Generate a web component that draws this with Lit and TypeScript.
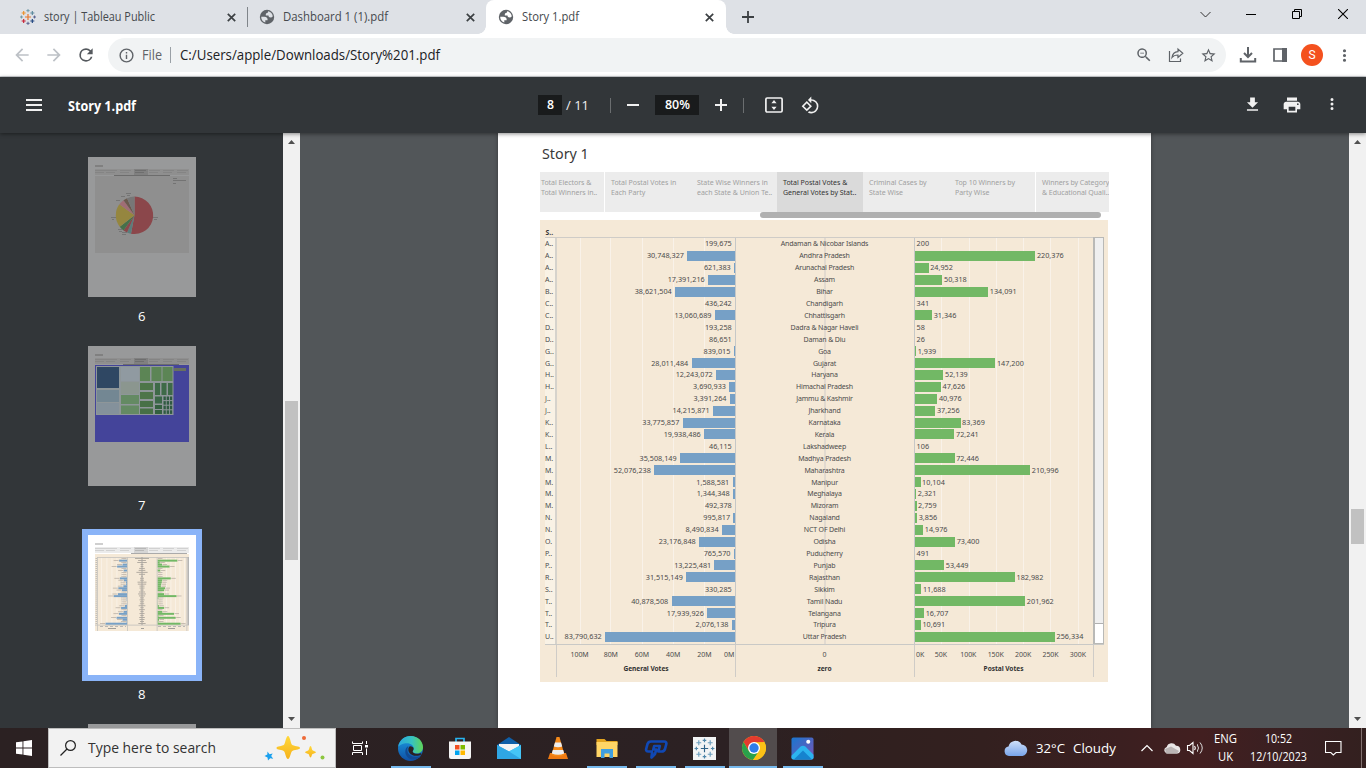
import { LitElement, html, svg, css } from 'lit';
import { customElement } from 'lit/decorators.js';

type State = [string, string, number, number];

const STATES: State[] = [
  ['A..', 'Andaman & Nicobar Islands', 199675, 200],
  ['A..', 'Andhra Pradesh', 30748327, 220376],
  ['A..', 'Arunachal Pradesh', 621383, 24952],
  ['A..', 'Assam', 17391216, 50318],
  ['B..', 'Bihar', 38621504, 134091],
  ['C..', 'Chandigarh', 436242, 341],
  ['C..', 'Chhattisgarh', 13060689, 31346],
  ['D..', 'Dadra & Nagar Haveli', 193258, 58],
  ['D..', 'Daman & Diu', 86651, 26],
  ['G..', 'Goa', 839015, 1939],
  ['G..', 'Gujarat', 28011484, 147200],
  ['H..', 'Haryana', 12243072, 52139],
  ['H..', 'Himachal Pradesh', 3690933, 47626],
  ['J..', 'Jammu & Kashmir', 3391264, 40976],
  ['J..', 'Jharkhand', 14215871, 37256],
  ['K..', 'Karnataka', 33775857, 83369],
  ['K..', 'Kerala', 19938486, 72241],
  ['L..', 'Lakshadweep', 46115, 106],
  ['M.', 'Madhya Pradesh', 35508149, 72446],
  ['M.', 'Maharashtra', 52076238, 210996],
  ['M.', 'Manipur', 1588581, 10104],
  ['M.', 'Meghalaya', 1344348, 2321],
  ['M.', 'Mizoram', 492378, 2759],
  ['N.', 'Nagaland', 995817, 3856],
  ['N.', 'NCT OF Delhi', 8490834, 14976],
  ['O.', 'Odisha', 23176848, 73400],
  ['P..', 'Puducherry', 765570, 491],
  ['P..', 'Punjab', 13225481, 53449],
  ['R..', 'Rajasthan', 31515149, 182982],
  ['S..', 'Sikkim', 330285, 11688],
  ['T..', 'Tamil Nadu', 40878508, 201962],
  ['T..', 'Telangana', 17939926, 16707],
  ['T..', 'Tripura', 2076138, 10691],
  ['U..', 'Uttar Pradesh', 83790632, 256334],
];

const num = (n: number) => n.toLocaleString('en-US');
const general = (n: number) => (n / 1e6) * 1.552;
const postal = (n: number) => (n / 1e3) * 0.546;

/** Values too small to show get no bar, only the label. */
const visible = (w: number) => (w < 0.8 ? 0 : w);

/** Single-line label of a fixed advance width. */
const label = (text: string, width: number, size: number, color: string, weight = 400) => {
  const h = Math.ceil(size / 2) * 2 + 6;
  return html`<svg class="label" width=${width} height=${h}>
    <text x="0" y=${Math.round(h / 2 + size * 0.357)} textLength=${width} lengthAdjust="spacingAndGlyphs"
      font-size=${size} font-weight=${weight} fill=${color}>${text}</text></svg>`;
};

const icon = (size: number, box: string, body: unknown) =>
  html`<svg width=${size} height=${size} viewBox=${box}>${body}</svg>`;

const material = (size: number, d: string, fill: string) =>
  icon(size, '0 0 24 24', svg`<path d=${d} fill=${fill}/>`);

const P = {
  back: 'M20 11H7.83l5.59-5.59L12 4l-8 8 8 8 1.41-1.41L7.83 13H20v-2z',
  fwd: 'M12 4l-1.41 1.41L16.17 11H4v2h12.17l-5.58 5.59L12 20l8-8z',
  reload: 'M17.65 6.35A7.96 7.96 0 0 0 12 4a8 8 0 1 0 7.73 10h-2.08A6 6 0 1 1 12 6c1.66 0 3.14.69 4.22 1.78L13 11h7V4l-2.35 2.35z',
  info: 'M11 7h2v2h-2zm0 4h2v6h-2zm1-9a10 10 0 1 0 0 20 10 10 0 0 0 0-20zm0 18a8 8 0 1 1 0-16 8 8 0 0 1 0 16z',
  zoomOut: 'M15.5 14h-.79l-.28-.27A6.5 6.5 0 1 0 13.73 14.43l.27.28v.79l5 4.99L20.49 19l-4.99-5zm-6 0a4.5 4.5 0 1 1 0-9 4.5 4.5 0 0 1 0 9zM7 9h5v1H7z',
  star: 'M22 9.24l-7.19-.62L12 2 9.19 8.63 2 9.24l5.46 4.73L5.82 21 12 17.27 18.18 21l-1.63-7.03L22 9.24zM12 15.4l-3.76 2.27 1-4.28-3.32-2.88 4.38-.38L12 6.1l1.71 4.04 4.38.38-3.32 2.88 1 4.28L12 15.4z',
  dots: 'M12 8a2 2 0 1 0 0-4 2 2 0 0 0 0 4zm0 2a2 2 0 1 0 0 4 2 2 0 0 0 0-4zm0 6a2 2 0 1 0 0 4 2 2 0 0 0 0-4z',
  download: 'M19 9h-4V3H9v6H5l7 7 7-7zM5 18v2h14v-2H5z',
  print: 'M19 8H5c-1.66 0-3 1.34-3 3v6h4v4h12v-4h4v-6c0-1.66-1.34-3-3-3zm-3 11H8v-5h8v5zm3-7a1 1 0 1 1 0-2 1 1 0 0 1 0 2zm-1-9H6v4h12V3z',
  rotate: 'M7.340 6.410L.860 12.900l6.490 6.480 6.490-6.480-6.500-6.490zM3.690 12.900l3.660-3.660L11 12.900l-3.660 3.660-3.650-3.660zm15.670-6.260A8.950 8.950 0 0 0 13 4V.760L8.760 5 13 9.240V6c1.790 0 3.580.680 4.950 2.050a7.007 7.007 0 0 1 0 9.900A6.973 6.973 0 0 1 13 20c-.970 0-1.940-.210-2.840-.610l-1.490 1.490A8.980 8.980 0 0 0 13 22c2.300 0 4.610-.880 6.360-2.640a8.980 8.980 0 0 0 0-12.720z',
};

const globe = (bg: string) => icon(16, '0 0 16 16', svg`
  <circle cx="8" cy="8" r="7.200" fill="#5f6368"/>
  <path d="M2.200 7.700h3.200c2.300 0 3.500 1.200 3.200 3.500H6.300v2.300C3.800 12.800 2.100 10.500 2.200 7.700zM13.800 7.200c-.5.800-1.200 1.200-2.100 1.200-1.500 0-2.200-.6-2.200-1.900H6.800c-.2-1.900.5-2.800 2-2.800 0-.7.2-1.100.6-1.400 2.300.5 4.100 2.500 4.400 4.900z" fill=${bg}/>`);

const plusMark = (x: number, y: number, r: number, c: string, w: number) =>
  svg`<path d=${`M${x - r} ${y}H${x + r}M${x} ${y - r}V${y + r}`} stroke=${c} stroke-width=${w}/>`;

const tableau = (size: number) => icon(size, '0 0 24 24', svg`
    ${plusMark(12, 12, 4.500, '#e8762c', 1.8)}
    ${plusMark(5.500, 6, 3, '#eb912b', 1.7)}${plusMark(18.500, 6, 3, '#59879b', 1.7)}
    ${plusMark(5.500, 18, 3, '#c72035', 1.7)}${plusMark(18.500, 18, 3, '#1f447e', 1.7)}
    ${plusMark(12, 2.500, 2.400, '#7099a6', 1.5)}${plusMark(12, 21.500, 2.400, '#5b6591', 1.5)}
    ${plusMark(2.200, 12, 2.200, '#7099a6', 1.5)}${plusMark(21.800, 12, 2.200, '#5b6591', 1.5)}`);

const closeX = icon(9, '0 0 9 9', svg`<path d="M.8.8l7.400 7.400M8.200.8L.8 8.200" stroke="#3c4043" stroke-width="1.700"/>`);

const arrowUp = html`<svg width="17" height="17" viewBox="0 0 17 17"><path d="M5 11l3.500-4 3.500 4z" fill="#505050"/></svg>`;
const arrowDown = html`<svg width="17" height="17" viewBox="0 0 17 17"><path d="M5 6l3.500 4L12 6z" fill="#505050"/></svg>`;

const base = css`
  :host { font-family: 'Open Sans', 'Noto Sans', sans-serif; box-sizing: border-box; }
  *, *::before, *::after { box-sizing: border-box; }
  svg { display: block; flex: none; }
  .label { overflow: visible; }
`;

@customElement('browser-chrome')
export class BrowserChrome extends LitElement {
  static styles = [base, css`
    :host { display: block; height: 77px; background: #fff; border-bottom: 1px solid #d0d3d6; }
    .strip { height: 34px; display: flex; background: #dee1e6; }
    .tab { display: flex; align-items: center; height: 34px; gap: 8px; }
    .tab .label { margin-right: auto; }
    .first { width: 248px; padding: 0 12px 0 20px; }
    .rule { width: 1px; height: 20px; margin: 7px 0 0 -1px; background: #80858a; }
    .second { width: 238px; padding: 0 11px; }
    .active { width: 240px; padding: 0 12px; background: #fff; border-radius: 8px 8px 0 0; }
    .foot { align-self: flex-end; width: 8px; height: 8px; }
    .l { margin-left: -8px; background: radial-gradient(circle at 0 0, #dee1e6 7.500px, #fff 8px); }
    .r { background: radial-gradient(circle at 100% 0, #dee1e6 7.500px, #fff 8px); }
    .new { width: 28px; display: flex; align-items: center; justify-content: center; }
    .win { margin-left: auto; display: flex; height: 28px; }
    .win span { width: 46px; display: flex; align-items: center; justify-content: center; }
    .bar { display: flex; align-items: center; height: 42px; padding-left: 6px; }
    .btn { width: 32px; display: flex; justify-content: center; flex: none; }
    .omni { width: 1118px; height: 34px; margin-left: 6px; border-radius: 17px; background: #f1f3f4; display: flex; align-items: center; padding: 0 2px; }
    .sep { width: 1px; height: 16px; margin: 0 9px 0 8px; background: #9aa0a6; }
    .url { margin-right: auto; }
    .avatar { width: 22px; height: 22px; border-radius: 50%; background: #f4511e; color: #fff; font: 12px/22px Roboto, sans-serif; text-align: center; }
    .right { display: flex; align-items: center; padding-left: 6px; }
  `];
  render() {
    return html`
      <div class="strip">
        <div class="tab first">${tableau(16)}${label('story | Tableau Public', 111, 12.5, '#45494d')}${closeX}</div>
        <i class="rule"></i>
        <div class="tab second">${globe('#dee1e6')}${label('Dashboard 1 (1).pdf', 105, 12.5, '#45494d')}${closeX}</div>
        <i class="foot l"></i>
        <div class="tab active">${globe('#fff')}${label('Story 1.pdf', 57, 12.5, '#45494d')}${closeX}</div>
        <i class="foot r"></i>
        <div class="new">${icon(12, '0 0 12 12', svg`<path d="M0 6h12M6 0v12" stroke="#3c4043" stroke-width="1.800"/>`)}</div>
        <div class="win">
          <span>${icon(11, '0 0 11 11', svg`<path d="M.5 3l5 5 5-5" fill="none" stroke="#333"/>`)}</span>
          <span>${icon(10, '0 0 10 10', svg`<path d="M0 5.500h10" stroke="#000"/>`)}</span>
          <span>${icon(10, '0 0 10 10', svg`<path d="M.5 2.500h7v7h-7zM2.500 2.500v-2h7v7h-2" fill="none" stroke="#000"/>`)}</span>
          <span>${icon(10, '0 0 10 10', svg`<path d="M0 0l10 10M10 0L0 10" stroke="#000" stroke-width="1.100"/>`)}</span>
        </div>
      </div>
      <div class="bar">
        <span class="btn">${material(20, P.back, '#bdc1c6')}</span>
        <span class="btn">${material(20, P.fwd, '#bdc1c6')}</span>
        <span class="btn">${material(20, P.reload, '#55595e')}</span>
        <div class="omni">
          <span class="btn">${material(17, P.info, '#5f6368')}</span>
          ${label('File', 20, 14, '#5f6368')}<i class="sep"></i>
          <span class="url">${label('C:/Users/apple/Downloads/Story%201.pdf', 260, 14, '#202124')}</span>
          <span class="btn">${material(18, P.zoomOut, '#5f6368')}</span>
          <span class="btn">${icon(16, '0 0 16 16', svg`<path d="M1.500 4v10.500h11v-3M4 10.500c.5-4 2.500-5.700 6-5.900V2l4.800 4.300L10 10.500V8c-2.800 0-4.500.6-6 2.500z" fill="none" stroke="#5f6368" stroke-width="1.200"/>`)}</span>
          <span class="btn">${material(17, P.star, '#5f6368')}</span>
        </div>
        <div class="right">
          <span class="btn">${icon(18, '0 0 18 18', svg`<path d="M9 1v9M5 7l4 4 4-4M1.800 12v3.500h14.400V12" fill="none" stroke="#5f6368" stroke-width="2"/>`)}</span>
          <span class="btn">${icon(14, '0 0 14 14', svg`<path d="M1 1h12v12H1z" fill="none" stroke="#5f6368" stroke-width="1.700"/><path d="M9 0h5v14H9z" fill="#5f6368"/>`)}</span>
          <span class="btn"><span class="avatar">S</span></span>
          <span class="btn">${material(19, P.dots, '#5f6368')}</span>
        </div>
      </div>`;
  }
}

@customElement('pdf-toolbar')
export class PdfToolbar extends LitElement {
  static styles = [base, css`
    :host { display: flex; align-items: center; height: 56px; background: #323639; box-shadow: 0 1px 4px rgba(0,0,0,.45); position: relative; z-index: 1; }
    .menu { margin: 0 25px 0 25px; width: 18px; display: flex; justify-content: center; }
    .name { margin-right: 402px; padding-top: 2px; }
    .box { height: 20px; background: #191b1c; display: flex; align-items: center; justify-content: center; }
    .page { width: 24px; margin-right: 4px; }
    .pct { width: 44px; margin: 0 16px; }
    .sep { width: 1px; height: 15px; background: #6b6e70; }
    .s1 { margin: 0 16px 0 21px; }
    .s2 { margin: 0 20px 0 16px; }
    .rot { margin-left: 17px; }
    .end { margin: 0 14px 0 auto; display: flex; }
    .end span { width: 40px; display: flex; justify-content: center; }
  `];
  render() {
    const w = '#f1f1f1';
    return html`
      <span class="menu">${icon(16, '0 0 16 16', svg`<path d="M0 3h16M0 8h16M0 13h16" stroke=${w} stroke-width="2"/>`)}</span>
      <span class="name">${label('Story 1.pdf', 68, 13.5, '#fff', 700)}</span>
      <span class="box page">${label('8', 7, 12.5, '#fff', 600)}</span>
      ${label('/ 11', 23, 13, w)}
      <i class="sep s1"></i>
      ${icon(12, '0 0 12 12', svg`<path d="M0 6h12" stroke=${w} stroke-width="2"/>`)}
      <span class="box pct">${label('80%', 25, 12.5, '#fff', 600)}</span>
      ${icon(12, '0 0 12 12', svg`<path d="M0 6h12M6 0v12" stroke=${w} stroke-width="2"/>`)}
      <i class="sep s2"></i>
      ${icon(20, '0 0 20 20', svg`<rect x="1.900" y="3" width="16.200" height="14" rx="1.200" fill="none" stroke=${w} stroke-width="1.700"/><path d="M10 5l2.600 3.200H7.400zM10 15l2.600-3.200H7.400z" fill=${w}/>`)}
      <span class="rot">${material(19, P.rotate, w)}</span>
      <span class="end">
        <span>${material(19, P.download, w)}</span><span>${material(20, P.print, w)}</span><span>${material(18, P.dots, w)}</span>
      </span>`;
  }
}

const slice = (a0: number, a1: number, c: string) => {
  const p = (a: number) => `${46.500 + 18.700 * Math.sin(a * 6.2832)} ${58.300 - 18.700 * Math.cos(a * 6.2832)}`;
  return svg`<path d=${`M46.500 58.300L${p(a0)}A18.700 18.700 0 ${a1 - a0 > 0.5 ? 1 : 0} 1 ${p(a1)}z`} fill=${c}/>`;
};

const miniTabs = (active: number, s0: number, s1: number, dim: boolean) => {
  const t = dim ? '#808080' : '#c6c6c6';
  return svg`
    <rect x="7" y="8.200" width="8" height="1.600" fill=${dim ? '#7b7b7b' : '#c4c4c4'}/>
    <rect x="7" y="12" width="94" height="6" fill=${dim ? '#8f8f8f' : '#ebebeb'}/>
    <rect x=${active} y="12" width="14" height="6" fill=${dim ? '#808080' : '#d5d5d5'}/>
    ${[7, 18, 32, 47, 61, 75, 89].map((x) => svg`<path d=${`M${x} 13.500h11M${x} 15.500h9`} stroke=${x === 47 ? (dim ? '#666' : '#aaa') : t} stroke-width=".7"/>`)}
    <rect x=${s0} y="18" width=${s1 - s0} height="1" fill=${dim ? '#6c6c6c' : '#aaa'}/>`;
};

const thumbPie = svg`
  <rect width="108" height="140" fill="#98999a"/>${miniTabs(46, 26, 82, true)}
  <rect x="7" y="19" width="94" height="77" fill="#8f8f8f"/>
  ${slice(0, 0.53, '#8b474b')}${slice(0.53, 0.565, '#5b7d7c')}${slice(0.565, 0.6, '#8b474b')}
  ${slice(0.6, 0.645, '#46704a')}${slice(0.645, 0.85, '#95863f')}${slice(0.85, 0.9, '#a06d75')}
  ${slice(0.9, 0.935, '#6b594e')}${slice(0.935, 1, '#777')}
  <path d="M38 36.500h5M39 38.500h3M33 39.500h4M28 43.500h4M23 60.500h5M24 62.500h2M65 60.500h5M66 62.500h3M30 72.500h4M31 74.500h3M34 75.500h5M34 77.500h4" stroke="#6f6f6f" stroke-width=".8"/>
  <path d="M85 21.500h4M85 23.500h9M94 23.500h4M85 26.500h3" stroke="#737373"/>`;

const R = (x: number, y: number, w: number, h: number, f: string) =>
  svg`<rect x=${x} y=${y} width=${w} height=${h} fill=${f}/>`;

const thumbTree = svg`
  ${R(0, 0, 108, 140, '#98999a')}${miniTabs(46, 35, 91, true)}
  ${R(7, 19, 94, 77, '#44449a')}${R(8, 20, 77.500, 49, '#8e9699')}
  ${R(9, 21, 22, 21, '#2f4763')}${R(9, 44, 22, 12, '#738793')}${R(9, 57, 22, 11, '#84919b')}
  ${R(33, 21, 18, 14, '#909aa1')}${R(33, 36, 18, 12, '#8b968f')}${R(33, 49, 18, 9, '#648a63')}${R(33, 59.500, 18, 8.500, '#648a63')}
  ${R(52, 21, 10, 14, '#5c8555')}${R(63.500, 21, 10, 14, '#5c8555')}${R(74.500, 21, 10, 14, '#5c8555')}
  ${R(52, 37, 13, 7, '#4d7549')}${R(52, 46, 13, 7, '#4d7549')}${R(52, 55, 13, 6, '#477046')}${R(52, 62.500, 13, 5.500, '#477046')}
  ${R(67, 37, 5, 12, '#3e6a48')}${R(73.500, 37, 5, 12, '#3e6a48')}${R(80, 37, 4.500, 12, '#3e6a48')}
  ${R(67, 50.500, 7, 7, '#3b6848')}${R(67, 59, 7, 4, '#33603f')}${R(67, 64, 7, 4, '#33603f')}
  ${[0, 1, 2, 3].map((r) => [0, 1, 2].map((c) => R(75.500 + c * 3.200, 50.500 + r * 4.600, 2.300, 3.600, '#2f5a41')))}
  ${R(86, 22, 12, 3, '#69705f')}`;

const thumbBars = svg`
  ${R(0, 0, 108, 140, '#fff')}${miniTabs(46, 43, 99, false)}
  ${R(7, 19, 94, 77, '#f5e9d7')}
  ${[13, 18.500, 23.500, 28.500, 34, 73.500, 78, 82.500, 87, 91.500, 96].map((x) => R(x, 22, .8, 68, '#faf3ea'))}
  ${R(9, 22, 92, .9, '#c9c6c1')}${R(7, 89.500, 94, 1.300, '#d5cfc6')}
  ${STATES.map(([, name, g, p], i) => {
    const y = 22.700 + i * 1.970;
    const gw = visible(general(g)) * 0.165;
    const pw = visible(postal(p)) * 0.165;
    const nw = name.length * 0.560;
    return svg`${R(39 - gw, y, gw, 1.970, '#76a0c6')}${R(69.500, y, pw, 1.970, '#72b865')}
      ${R(33.500 - gw, y + .5, 5, .7, '#b3aaa0')}${R(70 + pw, y + .5, 4.500, .7, '#b3aaa0')}
      ${R(54 - nw / 2, y + .4, nw, .8, '#a39d95')}${R(7.500, y + .5, 1.500, .7, '#aaa')}`;
  })}
  ${[9, 39, 68.700, 98.500].map((x) => R(x, 22, .8, 74, '#c4c2bf'))}${R(53.500, 22, 1, 68, '#a9a6a2')}
  ${R(99.500, 22, 1.500, 68, '#b4b4b4')}
  <path d="M12 91.500h26M70 91.500h27" stroke="#aaa" stroke-width=".8" stroke-dasharray="3 2"/>
  <path d="M20 93.500h8M53 93.500h3M80 93.500h7" stroke="#8a8a8a" stroke-width=".8"/>`;

@customElement('thumb-panel')
export class ThumbPanel extends LitElement {
  static styles = [base, css`
    :host { display: flex; width: 300px; height: 595px; background: #323639; overflow: hidden; }
    .list { width: 283px; padding-top: 18px; display: flex; flex-direction: column; align-items: center; }
    .item { height: 189px; flex: none; display: flex; flex-direction: column; align-items: center; gap: 3px; }
    .frame { border: 6px solid transparent; }
    .on { border-color: #8ab4f8; }
    .bar { width: 17px; background: #f1f1f1; display: flex; flex-direction: column; align-items: center; }
    .thumb { width: 13px; height: 159px; margin: 251px 0 auto; background: #c1c1c1; }
  `];
  render() {
    const pages: [string, unknown][] = [['6', thumbPie], ['7', thumbTree], ['8', thumbBars], ['', R(0, 0, 108, 140, '#98999a')]];
    return html`
      <div class="list">${pages.map(([n, body]) => html`
        <div class="item">
          <div class="frame ${n === '8' ? 'on' : ''}"><svg width="108" height="140" viewBox="0 0 108 140">${body}</svg></div>
          ${n ? label(n, 7.5, 13, '#fff') : ''}
        </div>`)}
      </div>
      <div class="bar">${arrowUp}<div class="thumb"></div>${arrowDown}</div>`;
  }
}

@customElement('story-page')
export class StoryPage extends LitElement {
  static styles = [base, css`
    :host { display: block; width: 653px; height: 595px; background: #fff; padding: 11px 0 0 42px; color: #4c4c4c; font-family: 'Noto Sans', sans-serif; }
    h1 { margin: 0 0 8px 2px; height: 20px; font: 400 14.300px/20px 'Noto Sans', sans-serif; color: #3a3a3a; }
    .tabs { display: flex; width: 569px; height: 40px; overflow: hidden; }
    .tab { width: 86px; flex: none; padding: 6px 0 0 6px; background: #ececec; color: #a0a0a0; font-size: 7px; line-height: 10px; white-space: pre; letter-spacing: -.02px; }
    .t0 { width: 64px; margin-right: 1px; padding-left: 1px; }
    .t3 { background: #dadada; color: #333; }
    .t6 { width: 73px; margin-left: 1px; padding-left: 6px; letter-spacing: -.06px; }
    .scroll { width: 341px; height: 6px; margin: 0 0 2px 220px; border-radius: 3px; background: #b0b0b0; }
    .panel { width: 568px; height: 462px; background: #f5e9d7; padding: 7px 4px 0 5px; }
    .head { height: 10px; font-size: 6.800px; line-height: 11px; font-weight: 700; color: #333; padding-left: .5px; }
    .plot { display: grid; grid-template-columns: 12px 179px 179px 179px 10px; height: 408px; border-top: 1px solid #cfccc7; border-bottom: 1px solid #c9c9c6; }
    .col { display: grid; grid-template-rows: repeat(34, 11.909px); border-right: 1px solid #c6c8c7; font-size: 7.250px; }
    .key { background: #f9f2e5; font-size: 7px; border-right: 2px solid #d6d3cc; }
    .cell { display: flex; align-items: center; white-space: nowrap; min-height: 0; line-height: 11px; }
    .names { font-size: 7px; letter-spacing: -.17px; }
    .names .cell { justify-content: center; padding-right: 1px; }
    .gen .cell { justify-content: flex-end; gap: 3.300px; }
    .post .cell { gap: 1.600px; }
    .gen { background: linear-gradient(#f9f2e9 0 0) 22.500px 0/1px 100% no-repeat, linear-gradient(#f9f2e9 0 0) 53px 0/1px 100% no-repeat, linear-gradient(#f9f2e9 0 0) 85px 0/1px 100% no-repeat, linear-gradient(#f9f2e9 0 0) 116px 0/1px 100% no-repeat, linear-gradient(#f9f2e9 0 0) 147px 0/1px 100% no-repeat; }
    .names { background: linear-gradient(#e2dad0 0 0) 88px 0/2px 100% no-repeat; }
    .post { background: repeating-linear-gradient(90deg, transparent 0 26.300px, #f9f2e9 26.300px 27.300px); }
    .bar { height: 10px; flex: none; }
    .blue { background: #76a0c6; }
    .green { background: #72b865; }
    .vs { display: flex; flex-direction: column; background: #efefef; border: 1px solid #b9b9b6; border-left-width: 2px; margin: -1px 0 0 -1px; }
    .rest { margin-top: auto; height: 20px; background: #fff; border-top: 1px solid #b0b0b0; }
    .axes { display: grid; grid-template-columns: 12px 179px 179px 179px; width: 549px; height: 32px; font-size: 7px; letter-spacing: -.05px; line-height: 10px; }
    .axis { border-right: 1px solid #cfccc7; padding-top: 5px; text-align: center; }
    .mid { padding-right: 1px; }
    .ticks { display: flex; height: 10px; white-space: nowrap; }
    .ticks span { flex: none; text-align: center; }
    .g { padding-left: 7px; }
    .g span { width: 31.200px; }
    .g span:last-child { width: auto; margin-left: 4px; }
    .p span { width: 27.400px; }
    .p span:first-child { width: auto; margin: 0 0 0 1px; }
    .p span:nth-child(2) { margin-left: 3px; }
    .axis b { display: block; color: #333; margin-top: 4px; font-size: 6.600px; }
  `];
  render() {
    const tabs = ['Total Electors &\nTotal Winners in..', 'Total Postal Votes in\nEach Party', 'State Wise Winners in\neach State & Union Te..', 'Total Postal Votes &\nGeneral Votes by Stat..', 'Criminal Cases by\nState Wise', 'Top 10 Winners by\nParty Wise', 'Winners by Category\n& Educational Quali..'];
    return html`
      <h1>Story 1</h1>
      <div class="tabs">${tabs.map((t, i) => html`<div class="tab t${i}">${t}</div>`)}</div>
      <div class="scroll"></div>
      <div class="panel">
        <div class="head">S..</div>
        <div class="plot">
          <div class="col key">${STATES.map((s) => html`<div class="cell">${s[0]}</div>`)}</div>
          <div class="col gen">${STATES.map((s) => html`<div class="cell"><span>${num(s[2])}</span><i class="bar blue" style="width:${visible(general(s[2]))}px"></i></div>`)}</div>
          <div class="col names">${STATES.map((s) => html`<div class="cell">${s[1]}</div>`)}</div>
          <div class="col post">${STATES.map((s) => html`<div class="cell"><i class="bar green" style="width:${visible(postal(s[3]))}px"></i><span>${num(s[3])}</span></div>`)}</div>
          <div class="vs"><div class="rest"></div></div>
        </div>
        <div class="axes">
          <div class="axis"></div>
          <div class="axis"><div class="ticks g">${['100M', '80M', '60M', '40M', '20M', '0M'].map((t) => html`<span>${t}</span>`)}</div><b>General Votes</b></div>
          <div class="axis mid"><div>0</div><b>zero</b></div>
          <div class="axis mid"><div class="ticks p">${['0K', '50K', '100K', '150K', '200K', '250K', '300K'].map((t) => html`<span>${t}</span>`)}</div><b>Postal Votes</b></div>
        </div>
      </div>`;
  }
}

@customElement('task-bar')
export class TaskBar extends LitElement {
  static styles = [base, css`
    :host { display: flex; height: 40px; align-items: center; background: linear-gradient(90deg, #2b2122 0, #2c2123 55%, #30201f 62%, #33201f 72%, #3b1f20 82%, #421f20 88%, #382022 95%, #33201f 100%); }
    .start { width: 48px; display: flex; justify-content: center; }
    .search { width: 288px; height: 40px; background: #f2f2f2; border: 1px solid #bdbdbd; display: flex; align-items: center; padding: 0 9px 0 11px; gap: 12px; }
    .spark { margin-left: auto; }
    .tv { width: 50px; padding-right: 2px; display: flex; justify-content: center; }
    .app { width: 49px; height: 40px; display: flex; flex-direction: column; align-items: center; }
    .app > .pic { height: 38px; display: flex; align-items: center; padding-top: 2px; }
    .run::after { content: ''; width: 40px; height: 2px; background: #76b9ed; }
    .cur { background: #524c4d; width: 48px; }
    .cur::after { width: 48px; }
    .cur > .pic { padding-left: 1px; }
    .cur + .app { margin-left: 1px; }
    .wx { display: flex; align-items: center; margin-left: auto; gap: 8px; }
    .tray { display: flex; align-items: center; margin-left: 25px; }
    .two { display: flex; flex-direction: column; align-items: center; }
    .lang { margin-left: 9px; width: 24px; }
    .time { margin: 0 18px 0 13px; width: 57px; }
    .edge { width: 1px; height: 40px; margin: 0 4px 0 19px; background: #81706f; }
  `];
  render() {
    const app = (cls: string, body: unknown) => html`<div class="app ${cls}"><span class="pic">${body}</span></div>`;
    return html`
      <span class="start">${icon(16, '0 0 16 16', svg`<path d="M0 2.300L6.500 1.400V7.500H0zM7.400 1.200L16 0v7.500H7.400zM0 8.500h6.500v6.100L0 13.700zM7.400 8.500H16V16l-8.600-1.200z" fill="#fff"/>`)}</span>
      <div class="search">
        ${icon(16, '0 0 16 16', svg`<circle cx="10.500" cy="5.500" r="4.900" fill="none" stroke="#222" stroke-width="1.200"/><path d="M7 9L.5 15.500" stroke="#222" stroke-width="1.200"/>`)}
        ${label('Type here to search', 128, 15, '#333')}
        <svg class="spark" width="62" height="28" viewBox="0 0 62 28">
          <defs><linearGradient id="y" x2="0" y2="1"><stop stop-color="#ffd83b"/><stop offset="1" stop-color="#f6b21b"/></linearGradient></defs>
          <path d="M24 2c2 0 2.600 7.300 4 8.800S36 12 36 14s-6.500 1.600-8 3.200S26 25 24 25s-2.600-6.300-4-7.800S12.500 16 12.500 14s6.100-1.700 7.500-3.200S22 2 24 2z" fill="url(#y)"/>
          <path d="M46.500 12c1 0 1.200 3.400 2 4.200s3.500 1 3.500 2-2.700 1.100-3.500 1.900-1 3.400-2 3.400-1.200-2.600-2-3.400-3.500-.9-3.500-1.900 2.700-1.200 3.500-2S45.500 12 46.500 12z" fill="url(#y)"/>
          <path d="M3.500 17.500l2 2.700 3.200-.7-1.500 2.500 2 2.800-3-.5-2.200 2.200-.5-3L.5 22l2.800-1.500z" fill="#1aa0ee"/>
          <circle cx="40" cy="4" r="2" fill="#ee6a37"/><circle cx="58.500" cy="23.500" r="2" fill="#8cc63f"/>
        </svg>
      </div>
      <span class="tv">${icon(16, '0 0 16 16', svg`<path d="M.5 1.500v2h10v-2M.5 15v-2.500h10V15M1.500 5.500h8v5h-8zM14.500 1v3M14.500 8.500V15" fill="none" stroke="#fff" stroke-width="1"/><path d="M13 5h3v2.500h-3z" fill="#fff"/>`)}</span>
      ${app('run', icon(25, '0 0 24 24', svg`<defs><linearGradient id="e1" x2="1"><stop stop-color="#2aa7dd"/><stop offset=".55" stop-color="#37c2c0"/><stop offset="1" stop-color="#61d655"/></linearGradient><linearGradient id="e2" x2="0" y2="1"><stop stop-color="#1b9de2"/><stop offset="1" stop-color="#0f4fa5"/></linearGradient></defs>
        <circle cx="12" cy="12" r="12" fill="url(#e2)"/><path d="M.2 10.500C1 4.300 6 0 12.300 0 19 0 24 5 24 10.700c0 3.700-2.800 6-6 6-2.500 0-4-1-4-1.900 0-.6 1-1 1-3C15 9.500 12.300 7 8.700 7 4.500 7 1.200 9 .2 10.500z" fill="url(#e1)"/><path d="M10 9.500c-2 1-3 3-3 5.500 0 4 3.300 7.500 8 7.500 3 0 5.400-1.300 7-3.400-1.600.8-3.300 1-5 1-4.500 0-8-2.500-8-6.600 0-1.800.6-3 1-4z" fill="#124a93"/><path d="M10.500 10.500c-2 4 1.500 8.500 7 8.500 2 0 3.700-.5 4.800-1.200.6-.4-.1-1.600-.8-1.300-2.600 1.200-7 .8-7.500-1.600 0-.6 1-1 1-3 0-1.400-3.400-2.900-4.500-1.400z" fill="#2b2122"/>`))}
      ${app('', icon(24, '0 0 24 24', svg`<path d="M8 6V2.500h8V6" fill="none" stroke="#28b5f0" stroke-width="1.700"/><path d="M1 5.500h22V21q0 2-2 2H3q-2 0-2-2z" fill="#f5f5f5"/><path d="M7 9h4.500v4.500H7z" fill="#f25022"/><path d="M12.500 9H17v4.500h-4.500z" fill="#7fba00"/><path d="M7 14.500h4.500V19H7z" fill="#00a4ef"/><path d="M12.500 14.500H17V19h-4.500z" fill="#ffb900"/>`))}
      ${app('', icon(24, '0 0 24 24', svg`<path d="M0 9L12 1l12 8v14H0z" fill="#0f5fa8"/><path d="M2 8h20v9H2z" fill="#f4f4f4"/><path d="M0 9l12 6.500L24 9v14H0z" fill="#2fb4ee"/><path d="M24 9v14H0l12-7.500z" fill="#45c5f6"/><path d="M0 9l12 6.500L24 23H0z" fill="#2fa6e4"/>`))}
      ${app('', icon(24, '0 0 24 24', svg`<path d="M4 17h16l2 6H2z" fill="#ee7a12"/><path d="M10.500 1h3l5 18q-6.500 3-13 0z" fill="#f58a1a"/><path d="M9 6.500h6l1.200 4q-4 1.500-8.400 0zM6.800 14h10.400l1 3.500q-6 2.500-12.400 0z" fill="#eceef0"/>`))}
      ${app('run', icon(24, '0 0 24 24', svg`<path d="M1.500 3h8l2 2h11v4h-21z" fill="#e3a420"/><path d="M1.500 6h21v15h-21z" fill="#ffd566"/><path d="M6 22v-9h12v9h-3.500v-4.500h-5V22z" fill="#3f9fe0"/>`))}
      ${app('run', icon(24, '0 0 24 24', svg`<path d="M9 15.500H4.500q-3 0-2.200-3L3.500 8q.8-2.500 3.500-2.500h13q3 0 2.200 3L21 13q-.8 2.500-3.500 2.500h-3.200L15.800 10h-5.600l-.9 3.500h3L11 18l-3.500 3.500.8-6" fill="none" stroke="#1048b4" stroke-width="2.700" stroke-linejoin="round"/>`))}
      ${app('run', icon(23, '0 0 24 24', svg`<path d="M0 0h24v24H0z" fill="#f2f4f5"/><g transform="translate(1.800 1.800) scale(.85)">${plusMark(12, 12, 4.500, '#2d6187', 1.400)}${[[5, 5], [19, 5], [5, 19], [19, 19]].map(([x, y]) => plusMark(x, y, 3, '#6a9dbd', 1.400))}${[[12, 2], [12, 22], [2, 12], [22, 12]].map(([x, y]) => plusMark(x, y, 2.200, '#4e86a9', 1.400))}</g>`))}
      ${app('run cur', icon(24, '0 0 24 24', svg`<circle cx="12" cy="12" r="12" fill="#fbc116"/><path d="M1.600 6A12 12 0 0 1 22.400 6L12 6.500 6.800 15z" fill="#e33b2e"/><path d="M1.600 6A12 12 0 0 0 11 23.960L17.200 15 12 17.500 6.800 15z" fill="#2aa14b"/><path d="M12 6.500h10.600A12 12 0 0 1 11 23.960L17.200 15z" fill="#fbc116"/><circle cx="12" cy="12" r="6" fill="#fff"/><circle cx="12" cy="12" r="4.700" fill="#2f7de9"/>`))}
      ${app('run', icon(23, '0 0 24 24', svg`<defs><linearGradient id="ph" x2="1" y2="1"><stop stop-color="#1976cf"/><stop offset="1" stop-color="#7a55b5"/></linearGradient></defs><rect x=".5" y=".5" width="23" height="23" rx="2" fill="url(#ph)"/><path d="M.5 19.500L10 10q2.500-2 5 0l8.500 8.500V21q0 2.500-2 2.500h-19q-2 0-2-2z" fill="#2cb4ef"/><path d="M12.500 14L22 23.500H3z" fill="#1683ce"/><circle cx="18" cy="5" r="2.100" fill="#fff"/>`))}
      <div class="wx">
        <svg width="24" height="16" viewBox="0 0 24 16"><defs><linearGradient id="cl" x2="0" y2="1"><stop stop-color="#cfe0fa"/><stop offset="1" stop-color="#78a4ea"/></linearGradient></defs><path d="M5 16a4.800 4.800 0 0 1-.5-9.500A7 7 0 0 1 17.500 4.500 5.800 5.800 0 0 1 18.500 16z" fill="url(#cl)"/></svg>
        ${label('32°C', 29, 13.5, '#fff')}${label('Cloudy', 43, 13.5, '#fff')}
      </div>
      <div class="tray">
        <svg width="12" height="8" viewBox="0 0 12 8"><path d="M.5 7L6 1.500 11.500 7" fill="none" stroke="#fff" stroke-width="1.200"/></svg>
        <svg width="44" height="16" viewBox="0 0 44 16"><path d="M14 13.500a3.400 3.400 0 0 1-.3-6.600 5.200 5.200 0 0 1 9.300-1.200 4 4 0 0 1 1.500 7.800z" fill="#e9e6e6"/><path d="M12 9l6-2.500 8 4.500-2 2.500H13z" fill="#bab4b4"/><path d="M34.500 5.500h2L40 2.500v11l-3.500-3h-2zM41.500 6q1.600 2 0 4" fill="none" stroke="#fff" stroke-width="1.100"/></svg>
        <svg width="7" height="16" viewBox="0 0 7 16"><path d="M0 4q3 4 0 8M3 2.500q4.500 5.500 0 11" fill="none" stroke="#ddd" stroke-width="1"/></svg>
        <div class="two lang">${label('ENG', 23, 12, '#fff')}${label('UK', 15, 12, '#fff')}</div>
        <div class="two time">${label('10:52', 27, 12, '#fff')}${label('12/10/2023', 57, 12, '#fff')}</div>
        <svg width="17" height="17" viewBox="0 0 17 17"><path d="M.5 1.500h15.500v11h-5L8.300 15l-2.500-2.500H.5z" fill="none" stroke="#fff" stroke-width="1.100"/></svg>
        <i class="edge"></i>
      </div>`;
  }
}

@customElement('app-root')
export class AppRoot extends LitElement {
  static styles = [base, css`
    :host { display: flex; flex-direction: column; width: 1366px; height: 768px; overflow: hidden; }
    .body { display: flex; height: 595px; background: #525659; }
    .page { margin-left: 198px; box-shadow: 0 0 4px rgba(0,0,0,.35); }
    .bar { width: 17px; margin-left: auto; background: #f1f1f1; display: flex; flex-direction: column; align-items: center; }
    .thumb { width: 13px; height: 35px; margin: 359px 0 auto; background: #c1c1c1; }
  `];
  render() {
    return html`
      <browser-chrome></browser-chrome>
      <pdf-toolbar></pdf-toolbar>
      <div class="body">
        <thumb-panel></thumb-panel>
        <story-page class="page"></story-page>
        <div class="bar">${arrowUp}<div class="thumb"></div>${arrowDown}</div>
      </div>
      <task-bar></task-bar>`;
  }
}
